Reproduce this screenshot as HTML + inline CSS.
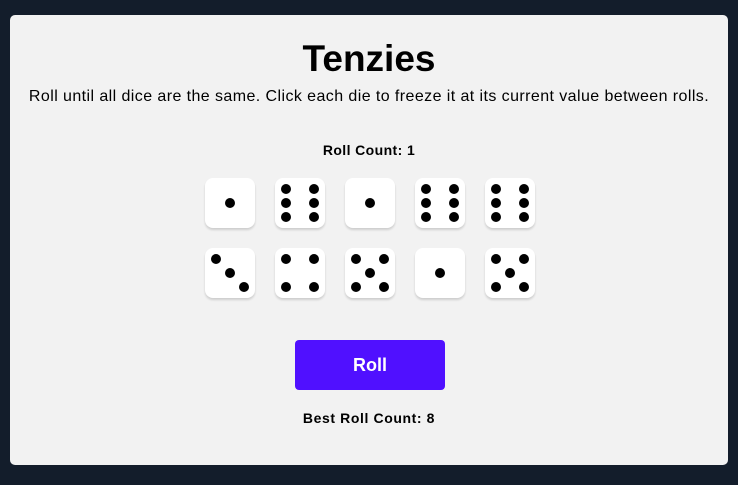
<!DOCTYPE html>
<html><head><style>
html,body{margin:0;padding:0;width:738px;height:485px;background:#131d2b;overflow:hidden;font-family:"Liberation Sans",sans-serif;}
.panel{position:absolute;left:10px;top:15px;width:718px;height:450px;background:#f2f2f2;border-radius:5px;}
.t{position:absolute;left:0;width:738px;text-align:center;color:#000;white-space:nowrap;}
.die{position:absolute;width:50px;height:50px;background:#fff;border-radius:8px;box-shadow:0 2px 2px rgba(0,0,0,0.15);}
.p{position:absolute;width:10px;height:10px;border-radius:50%;background:#000;}
.btn{position:absolute;left:295px;top:340px;width:150px;height:50px;background:#5010ff;border-radius:4px;color:#fff;font-weight:bold;font-size:18px;text-align:center;line-height:50px;}
</style></head><body>
<div class="panel"></div>
<div class="t" style="top:38px;font-size:37px;font-weight:bold;">Tenzies</div>
<div class="t" style="top:88px;font-size:16px;letter-spacing:0.42px;">Roll until all dice are the same. Click each die to freeze it at its current value between rolls.</div>
<div class="t" style="top:142px;font-size:14px;font-weight:bold;letter-spacing:0.4px;">Roll Count: 1</div>
<div id="dice"></div>
<div class="btn">Roll</div>
<div class="t" style="top:410px;font-size:14px;font-weight:bold;letter-spacing:0.6px;">Best Roll Count: 8</div>
<script>
var P={1:[[25,25]],3:[[11,11],[25,25],[39,39]],4:[[11,11],[39,11],[11,39],[39,39]],5:[[11,11],[39,11],[25,25],[11,39],[39,39]],6:[[11,11],[39,11],[11,25],[39,25],[11,39],[39,39]]};
var v=[1,6,1,6,6,3,4,5,1,5],h='';
for(var i=0;i<10;i++){var x=205+70*(i%5),y=i<5?178:248;h+='<div class="die" style="left:'+x+'px;top:'+y+'px">';
P[v[i]].forEach(function(p){h+='<div class="p" style="left:'+(p[0]-5)+'px;top:'+(p[1]-5)+'px"></div>'});h+='</div>';}
document.getElementById('dice').innerHTML=h;
</script>
</body></html>
